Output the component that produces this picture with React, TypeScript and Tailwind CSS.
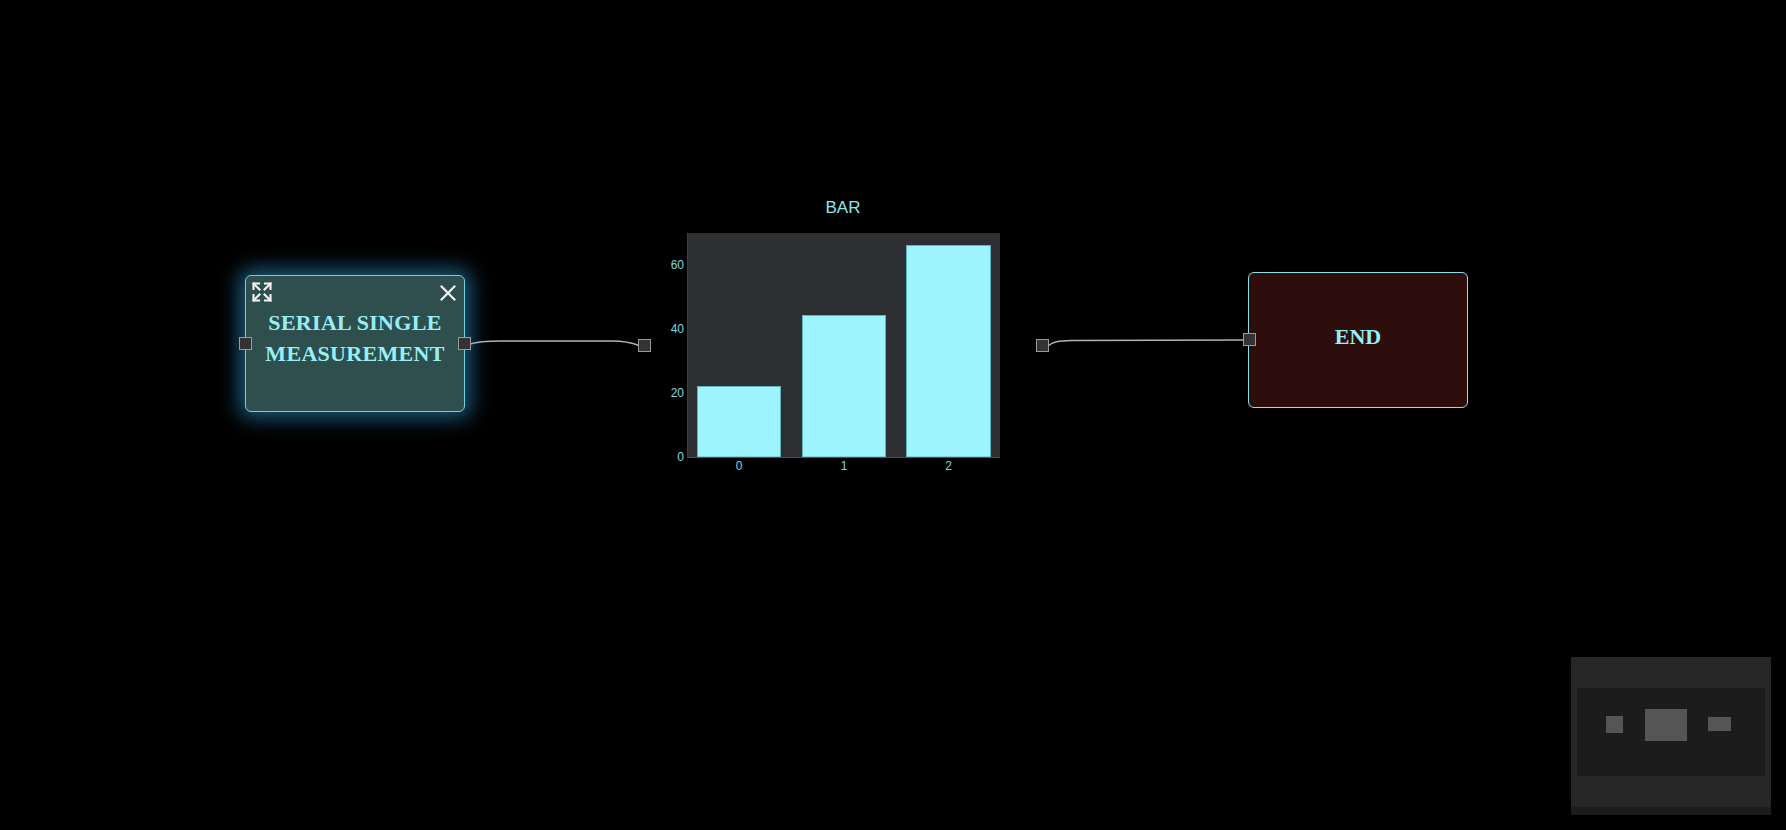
import React from "react";

const handleCls = "absolute h-[13px] w-[13px] border border-[#9a9a9a] bg-[#333333]";
const sans = "font-['Liberation_Sans',Arial,sans-serif]";

function ExpandIcon() {
  return (
    <svg width="20" height="20" viewBox="0 0 20 20" fill="none" stroke="#f5f5f5" strokeWidth="2.1" strokeLinecap="square">
      <path d="M1.5 7V1.5H7" />
      <path d="M1.5 1.5 7.5 7.5" />
      <path d="M13 1.5h5.5V7" />
      <path d="M18.5 1.5 12.5 7.5" />
      <path d="M1.5 13v5.5H7" />
      <path d="M1.5 18.5 7.5 12.5" />
      <path d="M13 18.5h5.5V13" />
      <path d="M18.5 18.5 12.5 12.5" />
    </svg>
  );
}

function CloseIcon() {
  return (
    <svg width="16" height="16" viewBox="0 0 16 16" fill="none" stroke="#f5f5f5" strokeWidth="2.1">
      <path d="M0.8 0.8 15.2 15.2" />
      <path d="M15.2 0.8 0.8 15.2" />
    </svg>
  );
}

function SerialNode() {
  return (
    <div className="absolute left-[245px] top-[275px] flex h-[137px] w-[220px] flex-col rounded-[6px] border-[1.5px] border-[#72cfe2] bg-[#2f4f4f] shadow-[0_0_20px_6px_rgba(45,150,205,0.6)]">
      <div className="flex items-start justify-between pl-[6px] pr-[8px] pt-[6px]">
        <ExpandIcon />
        <div className="pt-[3px]">
          <CloseIcon />
        </div>
      </div>
      <div className="mt-[5px] text-center font-['Liberation_Serif','Times_New_Roman',serif] text-[22px] font-bold leading-[31px] tracking-[0.3px] text-[#97eff6]">
        SERIAL SINGLE
        <br />
        MEASUREMENT
      </div>
      <div className={`${handleCls} -left-[7px] top-[61px]`} />
      <div className={`${handleCls} -right-[7px] top-[61px]`} />
    </div>
  );
}

function EndNode() {
  return (
    <div className="absolute left-[1248px] top-[272px] flex h-[136px] w-[220px] items-center justify-center rounded-[6px] border border-[#8fdfe9] bg-[#2d0e0d] pb-[7px]">
      <span className="font-['Liberation_Serif','Times_New_Roman',serif] text-[22px] font-bold text-[#97eff6]">
        END
      </span>
      <div className={`${handleCls} -left-[6px] top-[60px]`} />
    </div>
  );
}

// plot drawn in page coordinates; the svg viewBox is offset to its origin
const bars = [
  { x0: 697, x1: 780, top: 386, label: "0" },
  { x0: 802, x1: 885, top: 315, label: "1" },
  { x0: 906, x1: 990, top: 245, label: "2" },
];
const yTicks = [
  { v: "0", y: 457 },
  { v: "20", y: 393 },
  { v: "40", y: 329 },
  { v: "60", y: 265 },
];

function BarChart() {
  return (
    <div className="absolute left-[644px] top-[190px] h-[290px] w-[400px]">
      <svg width="400" height="290" viewBox="644 190 400 290" className={sans}>
        <text x="843" y="213" textAnchor="middle" fontSize="17" fill="#8ee6ee">
          BAR
        </text>
        <rect x="687" y="233" width="313" height="224" fill="#2d2f33" />
        {bars.map((b) => (
          <rect
            key={b.label}
            x={b.x0 + 0.5}
            y={b.top + 0.5}
            width={b.x1 - b.x0}
            height={457 - b.top - 0.5}
            fill="#9df4ff"
            stroke="#5fb3bd"
            strokeWidth="1"
          />
        ))}
        <line x1="687" y1="457.5" x2="1000" y2="457.5" stroke="#4a4d52" strokeWidth="1" />
        <line x1="687.5" y1="233" x2="687.5" y2="458" stroke="#3a3d42" strokeWidth="1" />
        {yTicks.map((t) => (
          <text key={t.v} x="684" y={t.y + 4} textAnchor="end" fontSize="12" fill="#7fd8e0">
            {t.v}
          </text>
        ))}
        {bars.map((b) => (
          <text key={b.label} x={(b.x0 + b.x1) / 2 + 0.5} y="470" textAnchor="middle" fontSize="12" fill="#7fd8e0">
            {b.label}
          </text>
        ))}
      </svg>
      <div className={`${handleCls} -left-[6px] top-[149px]`} />
      <div className={`${handleCls} left-[392px] top-[149px]`} />
    </div>
  );
}

function Edges() {
  return (
    <svg className="absolute left-0 top-0" width="1786" height="830">
      <path
        d="M470 344 C478 341.5 486 341 500 341 L612 341 C624 341 630 342 639 345.5"
        fill="none"
        stroke="#b4b4b4"
        strokeWidth="1.5"
      />
      <path
        d="M1048 346 C1053 341.5 1058 340.8 1072 340.6 L1244 340"
        fill="none"
        stroke="#b4b4b4"
        strokeWidth="1.5"
      />
    </svg>
  );
}

function MiniMap() {
  return (
    <div className="absolute bottom-[15px] right-[15px] h-[158px] w-[200px]">
      <svg width="200" height="158" viewBox="0 0 200 158">
        <rect x="0" y="0" width="200" height="158" fill="#262626" />
        <rect x="6" y="31" width="188" height="88" fill="#1c1c1c" />
        <rect x="0" y="150" width="200" height="8" fill="#1c1c1c" />
        <rect x="35" y="59" width="17" height="17" fill="#555555" />
        <rect x="74" y="52" width="42" height="32" fill="#555555" />
        <rect x="137" y="60" width="23" height="14" fill="#555555" />
      </svg>
    </div>
  );
}

export default function App() {
  return (
    <div className="relative h-[830px] w-[1786px] overflow-hidden bg-black">
      <Edges />
      <SerialNode />
      <BarChart />
      <EndNode />
      <MiniMap />
    </div>
  );
}
